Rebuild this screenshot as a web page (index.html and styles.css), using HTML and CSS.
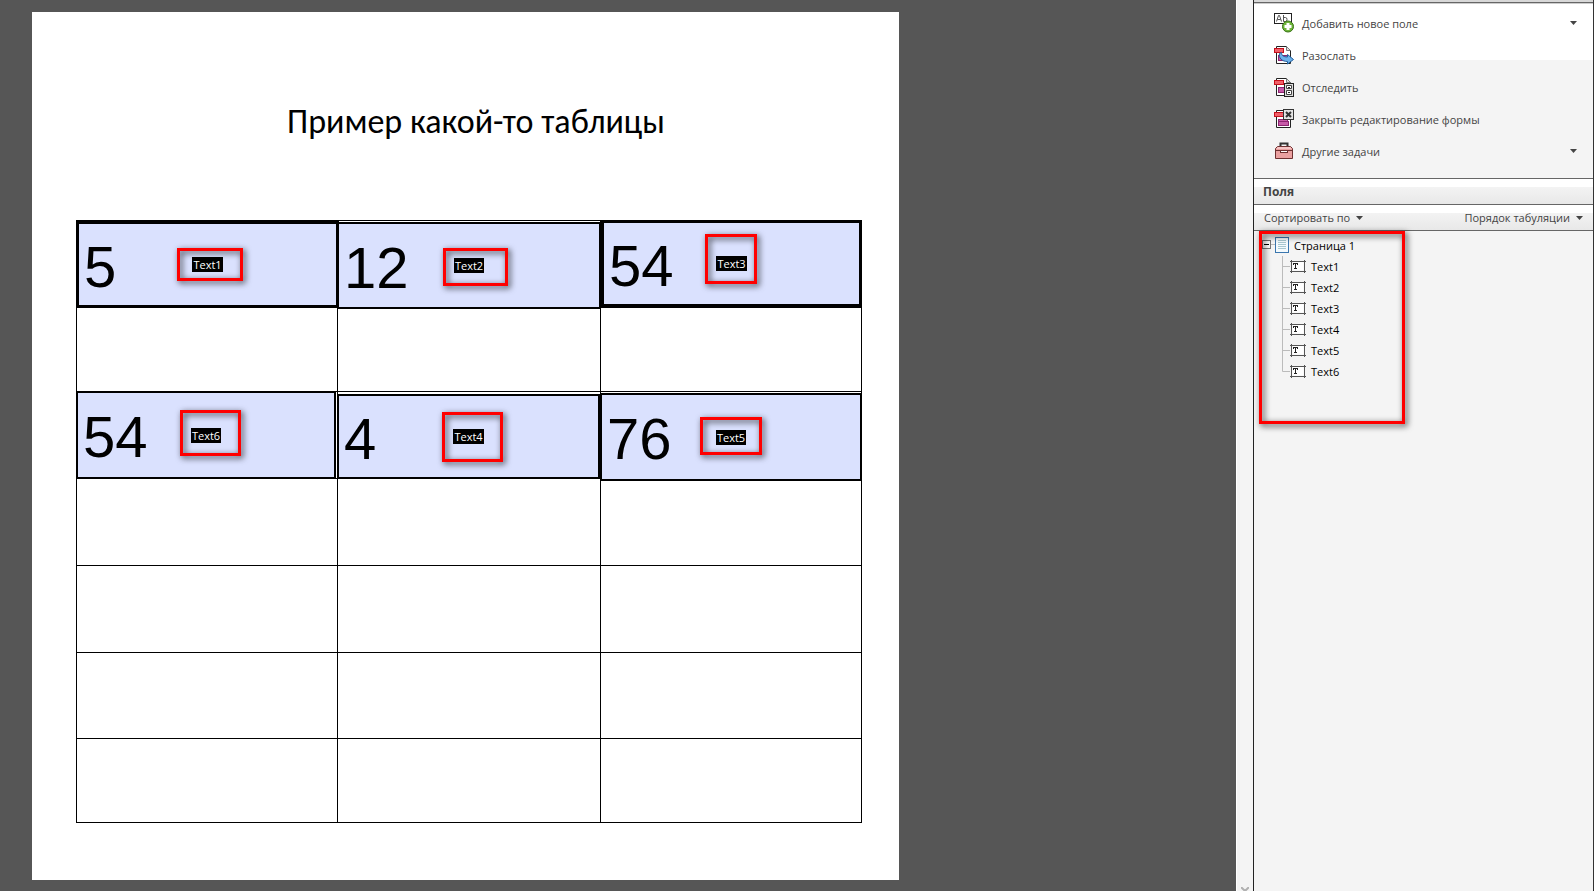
FILE: index.html
```html
<!DOCTYPE html>
<html lang="ru">
<head>
    <meta charset="UTF-8">
    <meta name="viewport" content="width=device-width, initial-scale=1.0">
    <title>Пример какой-то таблицы</title>
    <link rel="stylesheet" href="styles.css">
</head>
<body>
    <svg class="sprite" aria-hidden="true">
      <symbol id="caret" viewBox="0 0 7 4"><path d="M0 0h7L3.5 4z" fill="#444"/></symbol>
      <symbol id="text-field" viewBox="0 0 16 13">
        <rect x="2.5" y="1.5" width="11" height="9" fill="#fff"/>
        <path d="M0 1.5h16M0 11.5h16M1.5 0v13M14.5 0v13" stroke="#555" fill="none"/>
        <path d="M3 3.500h5M5.500 3v6M4 8.500h3M3.500 3v2M7.500 3v2" stroke="#222" fill="none"/>
      </symbol>
      <symbol id="branch" viewBox="0 0 8 21"><path d="M.5 0v21M0 10.5h8" stroke="#bbb" fill="none"/></symbol>
      <symbol id="branch-last" viewBox="0 0 8 21"><path d="M.5 0v10.5h7.5" stroke="#bbb" fill="none"/></symbol>
      <symbol id="pdf" viewBox="0 0 20 20">
        <path d="M2.500 1.500h10l4 4v13h-14z" fill="#fff" stroke="#222"/>
        <path d="M12.500 1.500v4h4" fill="#ddd" stroke="#777"/>
        <rect x=".5" y="3.500" width="9" height="4" fill="#f0606a" stroke="#c4101c"/>
        <rect x="4.500" y="10.500" width="9" height="5" fill="#c75aa8" stroke="#8c2470"/>
      </symbol>
    </svg>

    <main class="workspace">
      <article class="sheet">
        <h1>Пример какой-то таблицы</h1>

        <div class="form">
          <table>
            <tbody>
              <tr class="tall"><td></td><td class="middle"></td><td></td></tr>
              <tr class="short"><td></td><td></td><td></td></tr>
              <tr class="tall"><td></td><td></td><td></td></tr>
              <tr class="tall"><td></td><td></td><td></td></tr>
              <tr class="tall"><td></td><td></td><td></td></tr>
              <tr class="medium"><td></td><td></td><td></td></tr>
              <tr class="short"><td></td><td></td><td></td></tr>
            </tbody>
          </table>

          <div class="field field-1"><input type="text" id="text1" value="5"><label for="text1">Text1</label></div>
          <div class="field field-2"><input type="text" id="text2" value="12"><label for="text2">Text2</label></div>
          <div class="field field-3"><input type="text" id="text3" value="54"><label for="text3">Text3</label></div>
          <div class="field field-6"><input type="text" id="text6" value="54"><label for="text6">Text6</label></div>
          <div class="field field-4"><input type="text" id="text4" value="4"><label for="text4">Text4</label></div>
          <div class="field field-5"><input type="text" id="text5" value="76"><label for="text5">Text5</label></div>

          <div class="mark mark-1"></div>
          <div class="mark mark-2"></div>
          <div class="mark mark-3"></div>
          <div class="mark mark-6"></div>
          <div class="mark mark-4"></div>
          <div class="mark mark-5"></div>
        </div>
      </article>
    </main>

    <div class="scrollbar">
      <svg width="8" height="4" viewBox="0 0 8 4"><path d="M0 0l4 4 4-4" fill="none" stroke="#b0b0b0" stroke-width="2"/></svg>
    </div>

    <aside class="panel">
      <div class="tasks">
        <button class="task" type="button">
          <svg width="20" height="20" viewBox="0 0 20 20">
            <rect x=".5" y=".5" width="17" height="10" fill="#fff" stroke="#222"/>
            <path d="M2.500 8.500l2-6h1l2 6M3.500 6.500h3M9.500 2v6.500M9.500 4.500h2q1.500 0 1.500 2t-1.500 2h-2" fill="none" stroke="#555"/>
            <circle cx="14" cy="13.500" r="5.500" fill="#6eb53a" stroke="#397316"/>
            <path d="M14 10v7M10.500 13.500h7" stroke="#fff" stroke-width="3"/>
          </svg>
          <span>Добавить новое поле</span>
          <svg class="caret" width="7" height="4"><use href="#caret"/></svg>
        </button>
        <button class="task" type="button">
          <svg width="20" height="20" viewBox="0 0 20 20">
            <use href="#pdf"/>
            <path d="M7.500 7.500c0 3 2 4.500 6 4.500v-2.500l6 5-6 4.500v-2.500c-6 0-9-4-8-8z" fill="#6cb1ea" stroke="#235e9c"/>
          </svg>
          <span>Разослать</span>
        </button>
        <button class="task" type="button">
          <svg width="20" height="20" viewBox="0 0 20 20">
            <use href="#pdf"/>
            <rect x="10.500" y="6.500" width="9" height="13" fill="#ddd" stroke="#222"/>
            <path d="M12.500 8.500h5v3h-5zM12.500 13.500h5v4h-5z" fill="#fff" stroke="#444"/>
            <path d="M14 10.500h2M14 15.500h2" stroke="#222"/>
          </svg>
          <span>Отследить</span>
        </button>
        <button class="task" type="button">
          <svg width="20" height="20" viewBox="0 0 20 20">
            <use href="#pdf"/>
            <rect x="9.500" y=".5" width="10" height="10" fill="#e4e4e4" stroke="#333"/>
            <path d="M12 3l5 5M17 3l-5 5" stroke="#333" stroke-width="2"/>
            <rect x="4.500" y="12.500" width="10" height="4" fill="#c75aa8" stroke="#8c2470"/>
          </svg>
          <span>Закрыть редактирование формы</span>
        </button>
        <button class="task" type="button">
          <svg width="20" height="20" viewBox="0 0 20 20">
            <path d="M6.500 5.500v-3h7v3" fill="none" stroke="#333" stroke-width="2"/>
            <path d="M1.500 7.500l2-2h13l2 2v10h-17z" fill="#eaa0a0" stroke="#6d3030"/>
            <path d="M2 9.500h16" stroke="#6d3030"/>
            <path d="M2.500 8l1.500-2h12l1.500 2z" fill="#f6c6c6"/>
            <rect x="6.500" y="9.500" width="7" height="2" fill="#fff" stroke="#6d3030"/>
          </svg>
          <span>Другие задачи</span>
          <svg class="caret" width="7" height="4"><use href="#caret"/></svg>
        </button>
      </div>

      <h2>Поля</h2>

      <div class="toolbar">
        <button type="button">Сортировать по <svg width="7" height="4"><use href="#caret"/></svg></button>
        <button type="button">Порядок табуляции <svg width="7" height="4"><use href="#caret"/></svg></button>
      </div>

      <div class="tree">
        <div class="tree-page">
          <svg width="27" height="21" viewBox="0 0 27 21">
            <path d="M8 9.500h5" stroke="#bbb"/>
            <rect x=".5" y="5.500" width="8" height="8" fill="#fff" stroke="#777"/>
            <path d="M2 9.500h5" stroke="#000"/>
            <rect x="13.500" y="2.500" width="13" height="15" fill="#f4fafd" stroke="#3a76ae"/>
            <path d="M16 5.500h8M16 7.500h8M16 9.500h8M16 11.500h8M16 13.500h8" stroke="#a8c8d0"/>
          </svg>
          <span>Страница 1</span>
        </div>
        <ul>
          <li><svg width="8" height="21"><use href="#branch"/></svg><svg width="16" height="13"><use href="#text-field"/></svg><span>Text1</span></li>
          <li><svg width="8" height="21"><use href="#branch"/></svg><svg width="16" height="13"><use href="#text-field"/></svg><span>Text2</span></li>
          <li><svg width="8" height="21"><use href="#branch"/></svg><svg width="16" height="13"><use href="#text-field"/></svg><span>Text3</span></li>
          <li><svg width="8" height="21"><use href="#branch"/></svg><svg width="16" height="13"><use href="#text-field"/></svg><span>Text4</span></li>
          <li><svg width="8" height="21"><use href="#branch"/></svg><svg width="16" height="13"><use href="#text-field"/></svg><span>Text5</span></li>
          <li><svg width="8" height="21"><use href="#branch-last"/></svg><svg width="16" height="13"><use href="#text-field"/></svg><span>Text6</span></li>
        </ul>
        <div class="mark mark-tree"></div>
      </div>
    </aside>
</body>
</html>
```

FILE: styles.css
```css
* {
  box-sizing: border-box;
}

:root {
  --desk: #565656;
  --panel: #f4f4f4;
  --line: #666;
  --field: #dae1fe;
  --mark: #f00;
}

body {
  margin: 0;
  min-height: 100vh;
  display: flex;
  background: var(--desk);
  font-family: "Open Sans", "Noto Sans", sans-serif;
  font-size: 11px;
  color: #444;
}

button {
  font: inherit;
  color: inherit;
  background: none;
  border: 0;
  padding: 0;
}

svg {
  display: block;
  flex: none;
}

.sprite {
  position: absolute;
  width: 0;
  height: 0;
}

/* document */
.workspace {
  flex: 1;
  padding: 12px 32px 11px;
}

.sheet {
  width: 867px;
  min-height: 868px;
  padding: 90px 37px 57px 44px;
  background: #fff;
  color: #000;
}

h1 {
  margin: 0 0 78px;
  padding-left: 14px;
  font-family: Carlito, Lato, "Open Sans", sans-serif;
  font-size: 34px;
  font-weight: 400;
  line-height: 40px;
  text-align: center;
}

.form {
  position: relative;
}

table {
  width: 786px;
  table-layout: fixed;
  border-collapse: collapse;
}

td {
  border: 1px solid #000;
  padding: 0;
}

.middle {
  width: 263px;
}

.tall {
  height: 87px;
}

.medium {
  height: 86px;
}

.short {
  height: 84px;
}

/* form fields lie over the table */
.field {
  position: absolute;
  display: grid;
  width: 263px;
  height: 87px;
}

.field input,
.field label {
  grid-area: 1 / 1;
}

.field input {
  width: 100%;
  height: 100%;
  min-width: 0;
  padding: 3px 5px 0;
  border: 2px solid #000;
  border-radius: 0;
  background: var(--field);
  color: #000;
  font-family: "Liberation Sans", Arial, sans-serif;
  font-size: 58px;
}

.field label {
  place-self: center;
  padding: 0 1px;
  background: #000;
  color: #fff;
  line-height: 15px;
}

.field-1 { left: 0; top: 1px; }
.field-2 { left: 261px; top: 2px; width: 264px; }
.field-3 { left: 525px; top: 0; width: 261px; }
.field-6 { left: 0; top: 171px; width: 260px; height: 88px; }
.field-4 { left: 261px; top: 174px; height: 85px; }
.field-5 { left: 524px; top: 173px; width: 262px; height: 88px; }

.field-1 input,
.field-3 input {
  border-width: 3px;
}

/* red highlight boxes */
.mark {
  position: absolute;
  border: 3px solid var(--mark);
  filter: drop-shadow(2px 2px 3px rgba(0, 0, 0, 0.8));
  pointer-events: none;
}

.mark-1 { left: 101px; top: 28px; width: 66px; height: 33px; }
.mark-2 { left: 367px; top: 28px; width: 65px; height: 38px; }
.mark-3 { left: 629px; top: 14px; width: 52px; height: 50px; }
.mark-6 { left: 104px; top: 190px; width: 61px; height: 46px; }
.mark-4 { left: 366px; top: 192px; width: 61px; height: 50px; }
.mark-5 { left: 624px; top: 197px; width: 62px; height: 38px; }
.mark-tree { left: 5px; top: 0; width: 146px; height: 193px; }

.scrollbar {
  width: 17px;
  display: flex;
  align-items: flex-end;
  justify-content: center;
  background: var(--panel);
  border-left: 1px solid #fff;
}

/* side panel */
.panel {
  width: 341px;
  background: var(--panel);
  border-left: 1px solid #222;
  border-right: 1px solid #333;
}

.tasks {
  height: 178px;
  padding-top: 5px;
  border-top: 2px solid #d8d8d8;
  background: linear-gradient(var(--line) 1px, #ccc 1px 2px, #fff 2px 58px, var(--panel) 58px);
}

.task {
  width: 100%;
  height: 32px;
  padding: 0 16px 0 20px;
  display: flex;
  align-items: center;
  gap: 8px;
  text-align: left;
}

.caret {
  margin-left: auto;
}

h2 {
  margin: 0;
  height: 26px;
  padding-left: 9px;
  border-top: 1px solid var(--line);
  background: linear-gradient(#fff 8px, #f3f3f3 8px, #e8e8e8);
  font-size: 12px;
  line-height: 25px;
}

.toolbar {
  height: 27px;
  padding: 0 10px;
  display: flex;
  justify-content: space-between;
  border-top: 1px solid var(--line);
  border-bottom: 1px solid var(--line);
  background: linear-gradient(#fff 8px, #f3f3f3 8px, #e8e8e8);
}

.toolbar button {
  display: flex;
  align-items: center;
  gap: 6px;
}

.tree {
  position: relative;
  padding: 4px 8px;
  color: #000;
}

.tree-page,
.tree li {
  display: flex;
  align-items: center;
  gap: 5px;
  height: 21px;
}

.tree ul {
  list-style: none;
  margin: 0;
  padding: 0 0 0 20px;
}

.tree li svg:first-child {
  margin-right: -5px;
}
```
